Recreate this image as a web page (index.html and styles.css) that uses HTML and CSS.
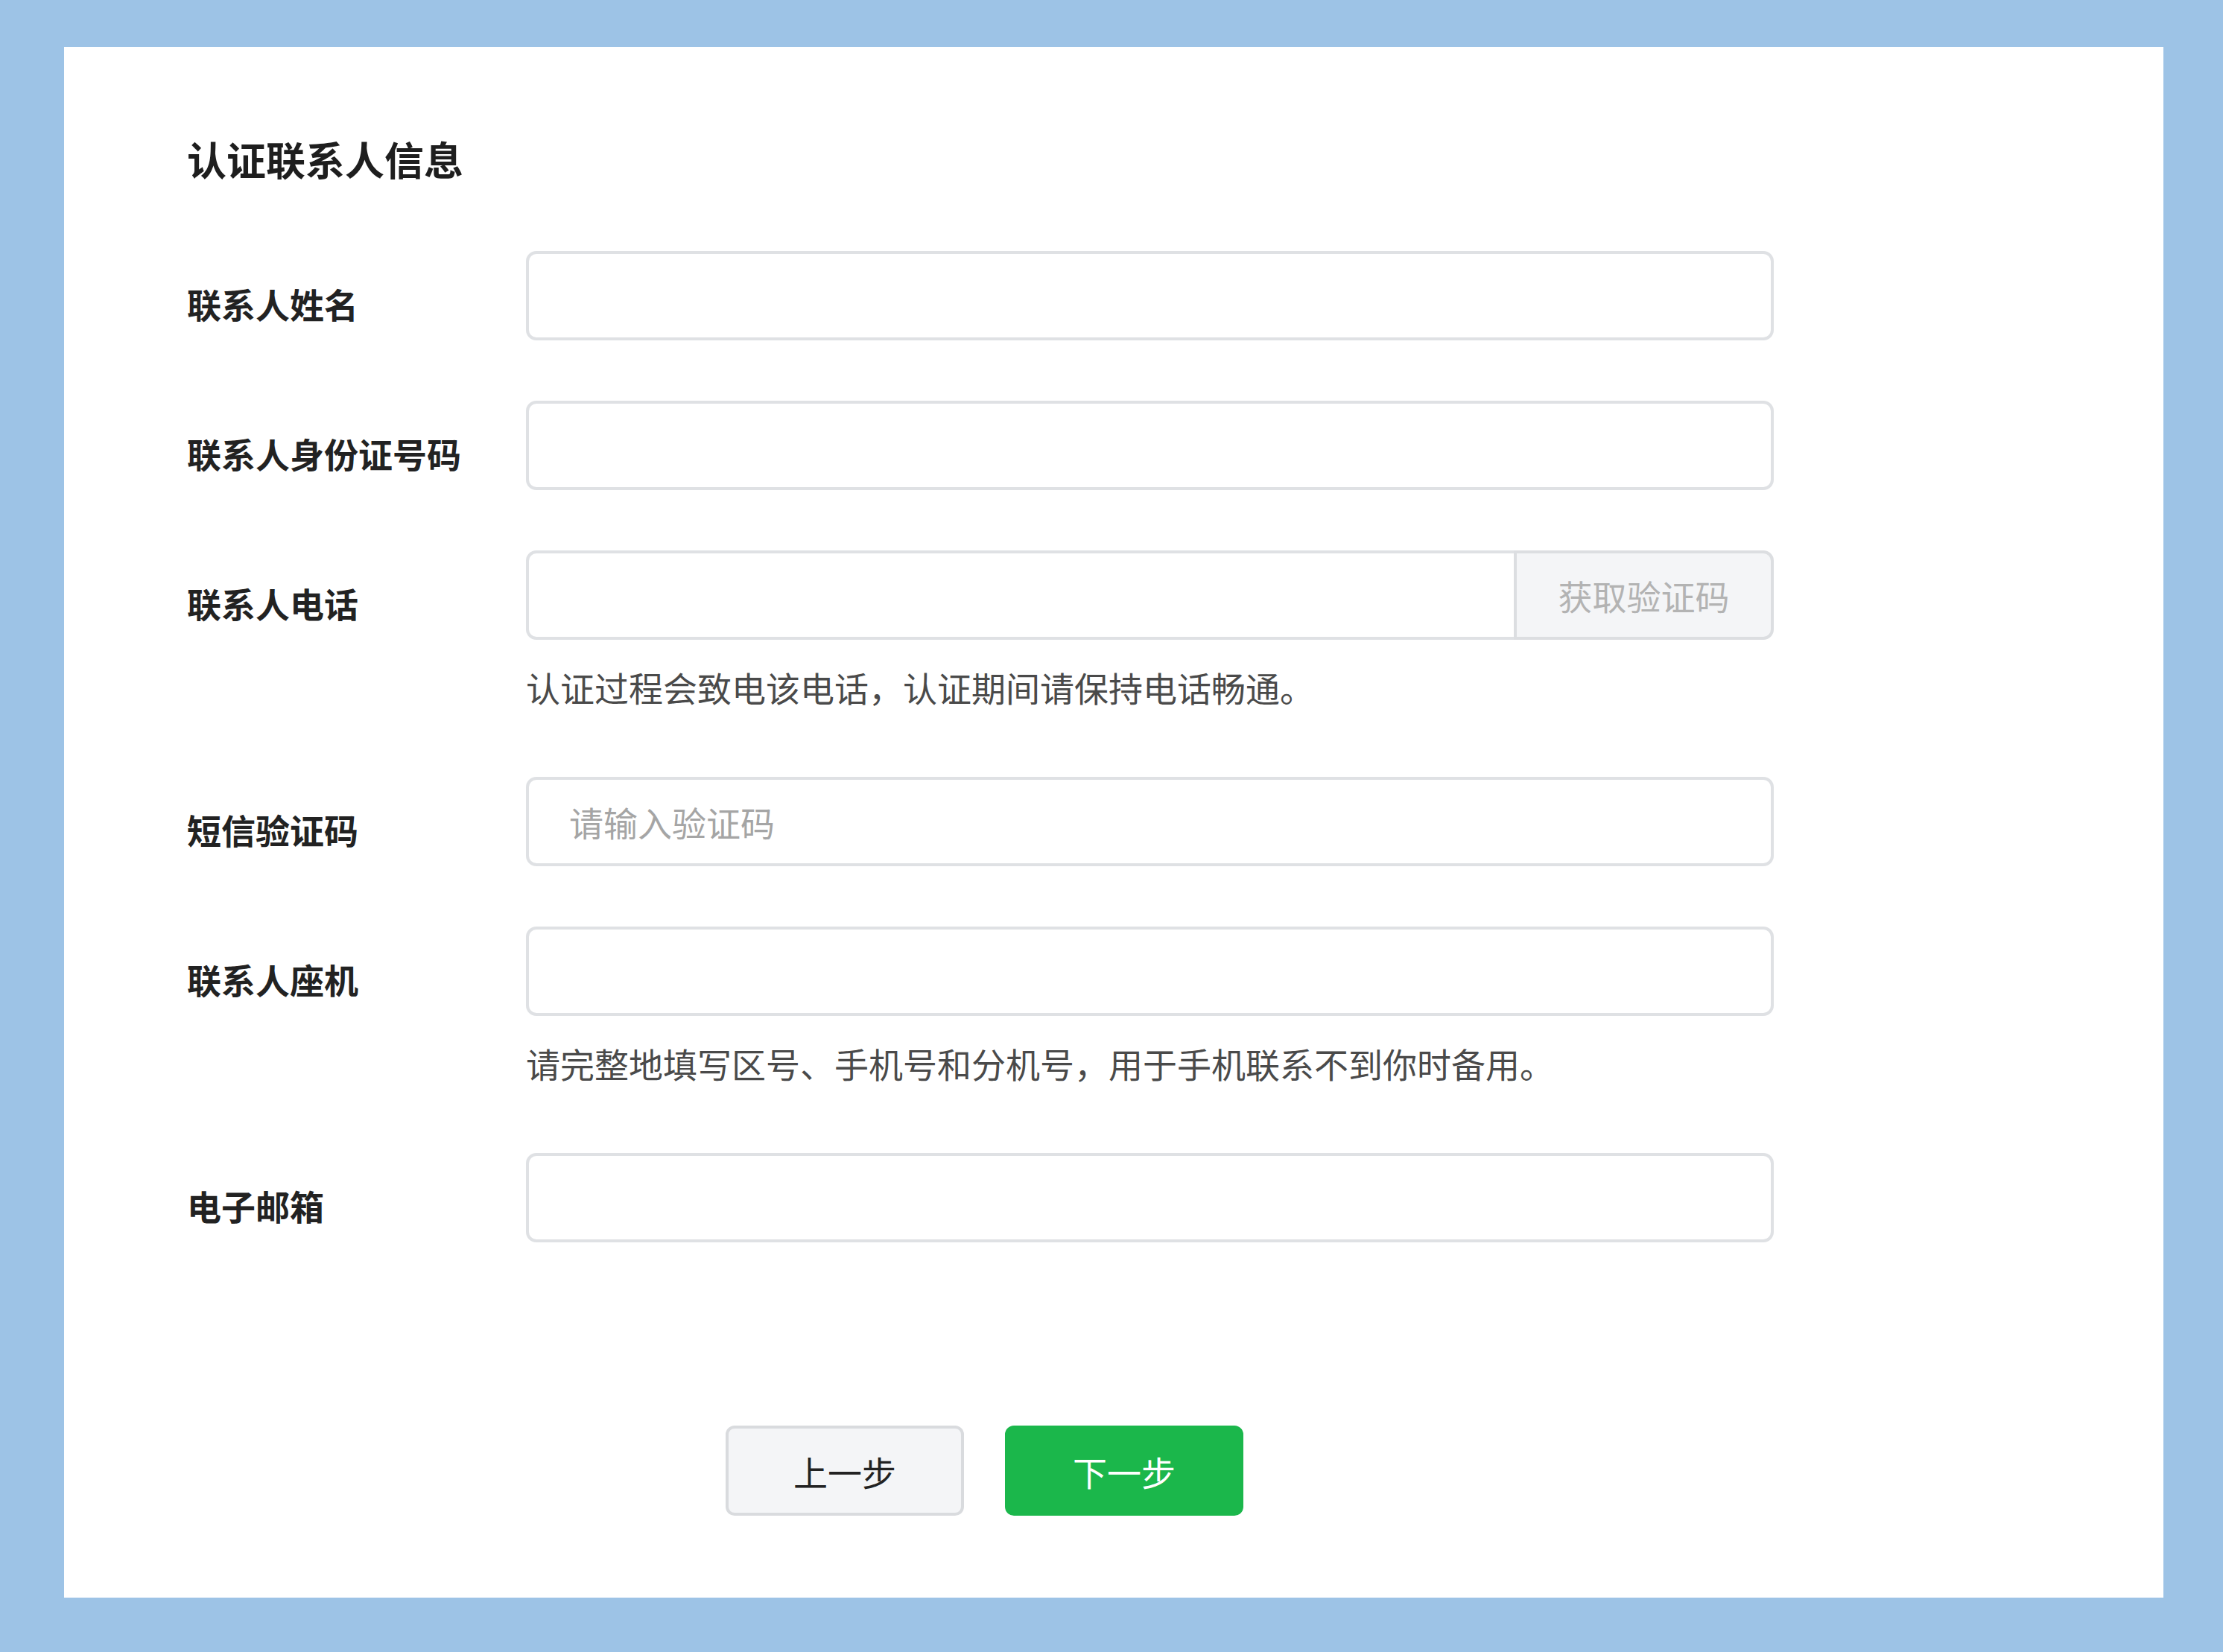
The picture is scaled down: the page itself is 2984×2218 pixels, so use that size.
FILE: index.html
```html
<!DOCTYPE html>
<html lang="zh-CN">
<head>
<meta charset="utf-8">
<title>认证联系人信息</title>
<link rel="stylesheet" href="styles.css">
</head>
<body>
<div class="panel">
  <h1 class="title">认证联系人信息</h1>
  <div class="form">
    <div class="field">
      <div class="label">联系人姓名</div>
      <div class="control"><input class="input" type="text"></div>
    </div>
    <div class="field">
      <div class="label">联系人身份证号码</div>
      <div class="control"><input class="input" type="text"></div>
    </div>
    <div class="field has-hint">
      <div class="label">联系人电话</div>
      <div class="control">
        <div class="group">
          <input class="input input-left" type="text">
          <button class="addon" type="button">获取验证码</button>
        </div>
        <div class="hint">认证过程会致电该电话，认证期间请保持电话畅通。</div>
      </div>
    </div>
    <div class="field">
      <div class="label">短信验证码</div>
      <div class="control"><input class="input" type="text" placeholder="请输入验证码"></div>
    </div>
    <div class="field has-hint">
      <div class="label">联系人座机</div>
      <div class="control">
        <input class="input" type="text">
        <div class="hint">请完整地填写区号、手机号和分机号，用于手机联系不到你时备用。</div>
      </div>
    </div>
    <div class="field last">
      <div class="label">电子邮箱</div>
      <div class="control"><input class="input" type="text"></div>
    </div>
  </div>
  <div class="actions">
    <button class="btn btn-default" type="button">上一步</button>
    <button class="btn btn-primary" type="button">下一步</button>
  </div>
</div>
</body>
</html>
```

FILE: styles.css
```css
html, body {
  margin: 0;
  padding: 0;
}
body {
  background: #9dc3e6;
  font-family: "Noto Sans CJK SC", "Noto Sans", sans-serif;
  padding: 63px 80px 73px 86px;
}
.panel {
  width: 2818px;
  height: 2082px;
  box-sizing: border-box;
  background: #ffffff;
  padding: 115px 0 0 165px;
}
.title {
  margin: 0;
  font-size: 53px;
  line-height: 70px;
  font-weight: bold;
  color: #1e1e1e;
}
.form {
  margin-top: 89px;
}
.field {
  display: flex;
  margin-bottom: 81px;
}
.field.has-hint {
  margin-bottom: 91px;
}
.field.last {
  margin-bottom: 0;
}
.label {
  width: 455px;
  flex: none;
  height: 120px;
  box-sizing: border-box;
  font-size: 46px;
  line-height: 100px;
  padding-top: 20px;
  font-weight: bold;
  color: #222222;
  white-space: nowrap;
}
.control {
  width: 1675px;
  flex: none;
}
.input {
  display: block;
  width: 100%;
  height: 120px;
  box-sizing: border-box;
  border: 4px solid #dfe1e4;
  border-radius: 14px;
  background: #ffffff;
  padding: 0 54px;
  font-family: inherit;
  font-size: 46px;
  color: #222;
  outline: none;
  margin: 0;
}
.input::placeholder {
  color: #a5a5a5;
}
.group {
  display: flex;
}
.input-left {
  flex: 1;
  width: auto;
  min-width: 0;
  border-radius: 14px 0 0 14px;
  border-right: none;
}
.addon {
  width: 349px;
  flex: none;
  height: 120px;
  box-sizing: border-box;
  border: 4px solid #dcdee1;
  border-radius: 0 14px 14px 0;
  background: #f4f5f7;
  color: #b3b3b3;
  font-family: inherit;
  font-size: 46px;
  margin: 0;
  padding: 0;
}
.hint {
  margin-top: 33px;
  font-size: 46px;
  line-height: 60px;
  color: #4a4a4a;
  white-space: nowrap;
}
.actions {
  display: flex;
  gap: 55px;
  margin-top: 246px;
  margin-left: 723px;
}
.btn {
  width: 320px;
  height: 121px;
  box-sizing: border-box;
  border-radius: 12px;
  font-family: inherit;
  font-size: 46px;
  margin: 0;
  padding: 0;
}
.btn-default {
  background: #f4f5f7;
  border: 4px solid #d9dbde;
  color: #222222;
}
.btn-primary {
  background: #1bb74b;
  border: 4px solid #1bb74b;
  color: #ffffff;
}
```
